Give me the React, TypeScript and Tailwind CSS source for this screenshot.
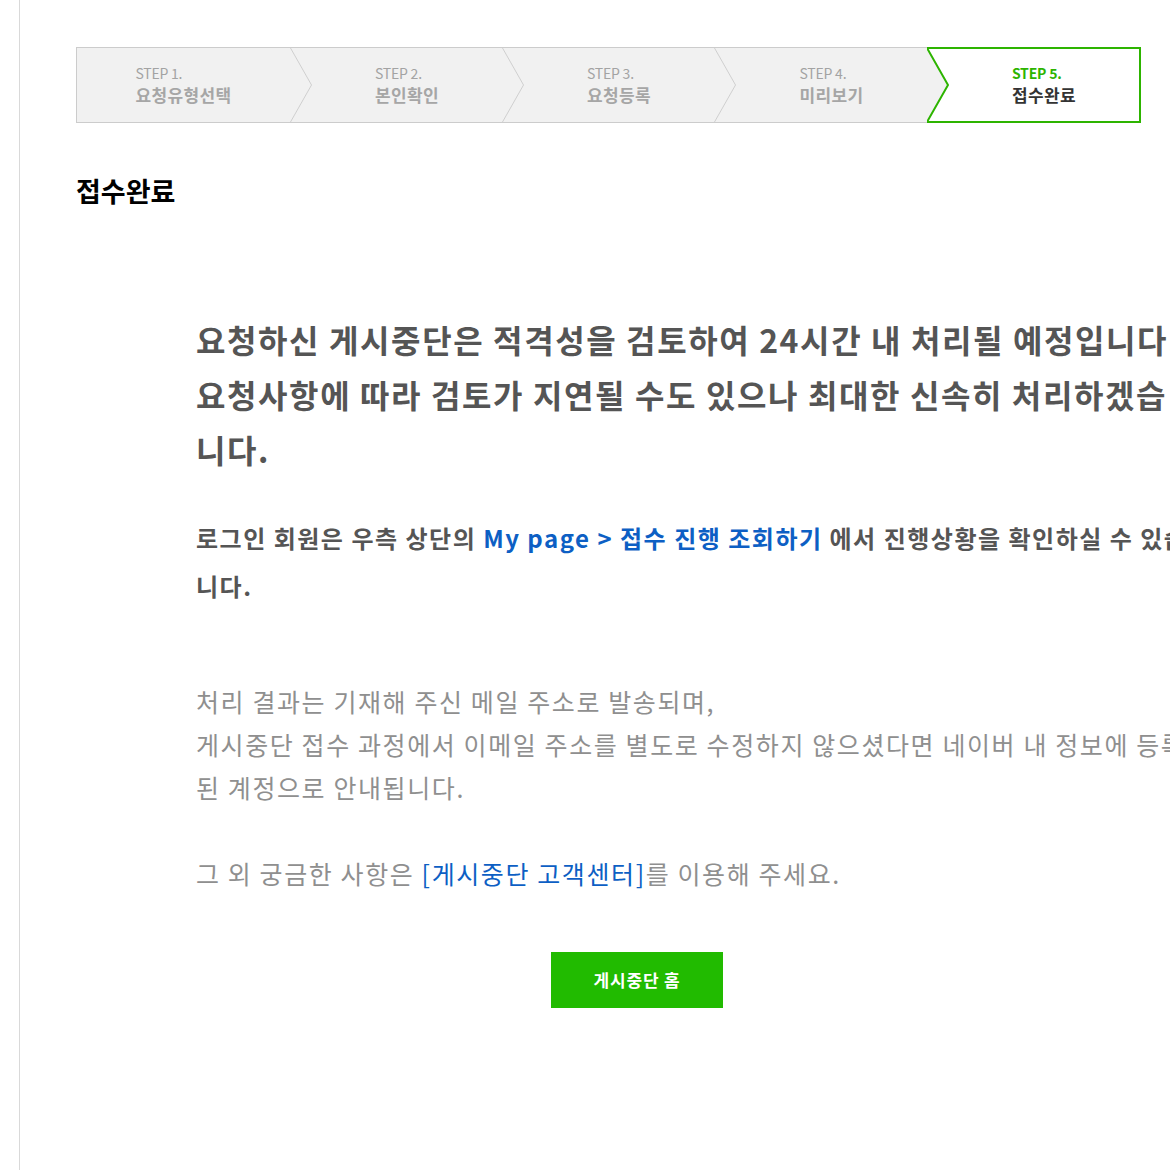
import * as React from 'react';

const steps = [
  { no: 'STEP 1.', label: '요청유형선택', w: 'w-[213px]' },
  { no: 'STEP 2.', label: '본인확인', w: 'w-[190px]' },
  { no: 'STEP 3.', label: '요청등록', w: 'w-[190px]' },
  { no: 'STEP 4.', label: '미리보기', w: 'w-[191px]' },
];

function Chevron() {
  return (
    <svg width="22" height="74" viewBox="0 0 22 74" className="shrink-0 block">
      <polyline points="0.5,0 21.5,37 0.5,74" fill="none" stroke="#cfcfcf" strokeWidth="1" />
    </svg>
  );
}

function Stepper() {
  return (
    <div className="flex h-[76px] w-[1065px]">
      <div className="flex border-y border-l border-[#cccccc] bg-[#f1f1f1]">
        {steps.map((s, i) => (
          <React.Fragment key={s.no}>
            <div className={`${s.w} flex items-center justify-center`}>
              <div className="flex flex-col">
                <span className="text-[14px] leading-[19px] tracking-[-0.2px] text-[#a3a3a3]">{s.no}</span>
                <span className="text-[17px] leading-[23px] tracking-[0.4px] font-bold text-[#a6a6a6]">{s.label}</span>
              </div>
            </div>
            {i < steps.length - 1 && <Chevron />}
          </React.Fragment>
        ))}
      </div>
      <div className="flex w-[214px] border-y-2 border-r-2 border-[#2db400] bg-white">
        <svg width="22" height="72" viewBox="0 0 22 72" className="shrink-0 block">
          <polygon points="0,0 21,36 0,72" fill="#f1f1f1" />
          <polyline points="0,-1 21,36 0,73" fill="none" stroke="#2db400" strokeWidth="2" />
        </svg>
        <div className="flex flex-1 items-center justify-center">
          <div className="flex flex-col">
            <span className="text-[14px] leading-[19px] tracking-[-0.2px] font-bold text-[#2db400]">STEP 5.</span>
            <span className="text-[17px] leading-[23px] tracking-[0.4px] font-bold text-[#333333]">접수완료</span>
          </div>
        </div>
      </div>
    </div>
  );
}

export default function App() {
  return (
    <div
      className="w-[1170px] min-h-[1170px] overflow-hidden bg-white"
      style={{ fontFamily: '"Noto Sans CJK KR", "Noto Sans", sans-serif' }}
    >
      <div className="ml-[19px] min-h-[1170px] border-l border-[#d9d9d9] pl-[56px] pt-[47px]">
        <Stepper />
        <h2 className="mt-[49px] text-[27px] leading-[38px] font-bold text-black">접수완료</h2>
        <div className="ml-[120px] w-[1010px]">
          <p className="mt-[102px] w-[994px] text-[32px] leading-[55px] tracking-[1.6px] font-bold text-[#555555]">
            요청하신 게시중단은 적격성을 검토하여 24시간 내 처리될 예정입니다.
            <br />
            요청사항에 따라 검토가 지연될 수도 있으나 최대한 신속히 처리하겠습니다.
          </p>
          <p className="mt-[37px] text-[24px] leading-[48px] tracking-[1.5px] font-bold text-[#555555]">
            로그인 회원은 우측 상단의 <span className="text-[#0d5fc4]">My page &gt; 접수 진행 조회하기</span> 에서 진행상황을 확인하실 수 있습니다.
          </p>
          <p className="mt-[70px] text-[25px] leading-[43px] tracking-[1.6px] text-[#8f8f8f]">
            처리 결과는 기재해 주신 메일 주소로 발송되며,
            <br />
            게시중단 접수 과정에서 이메일 주소를 별도로 수정하지 않으셨다면 네이버 내 정보에 등록된 계정으로 안내됩니다.
            <br />
            <br />
            그 외 궁금한 사항은 <span className="text-[#0d5fc4]">[게시중단 고객센터]</span>를 이용해 주세요.
          </p>
          <div className="mt-[57px] pl-[355px]">
            <button className="flex h-[56px] w-[172px] items-center justify-center bg-[#21bb00] text-[17px] tracking-[0.8px] font-bold text-white">
              게시중단 홈
            </button>
          </div>
        </div>
      </div>
    </div>
  );
}
